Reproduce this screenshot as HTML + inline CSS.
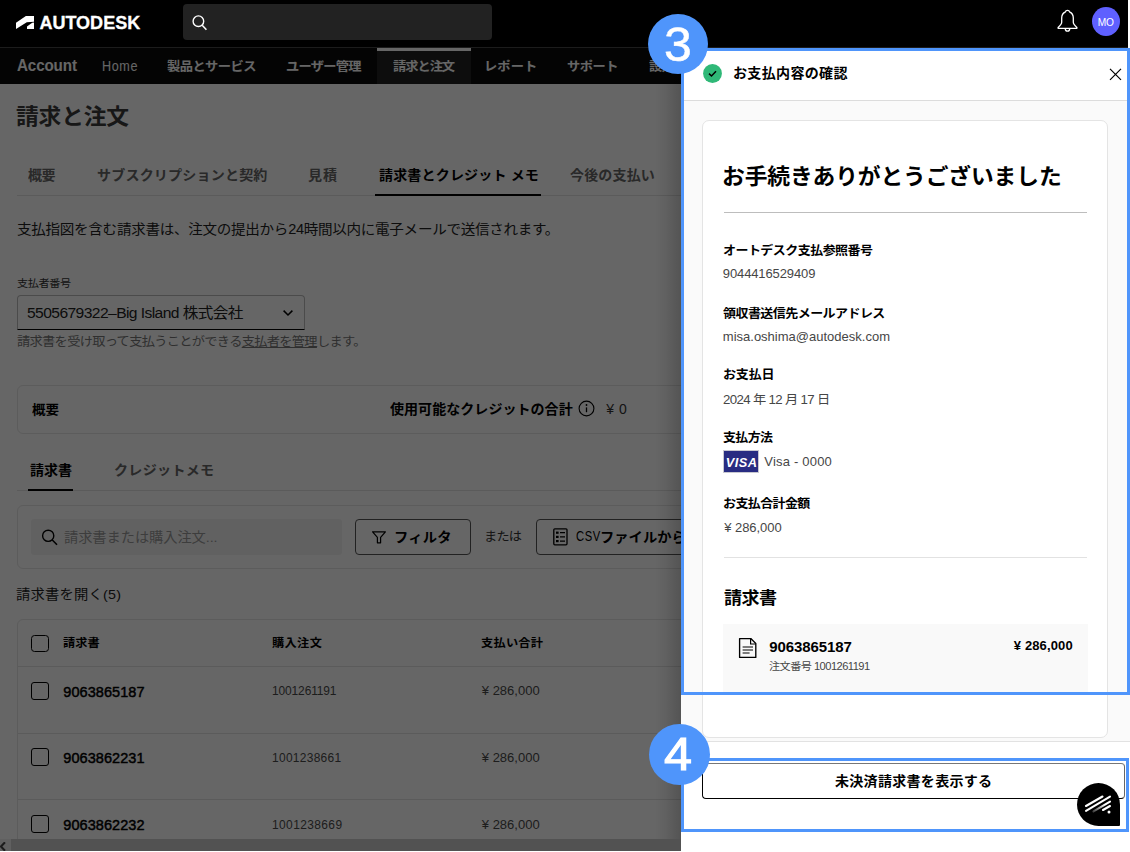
<!DOCTYPE html>
<html lang="ja">
<head>
<meta charset="utf-8">
<title>請求と注文 - Autodesk Account</title>
<style>
*{box-sizing:border-box;margin:0;padding:0}
html,body{width:1130px;height:852px;overflow:hidden;background:#fff}
body{font-family:"Liberation Sans","Noto Sans CJK JP",sans-serif;color:#000;position:relative}
.a{position:absolute;display:block}
.t{position:absolute;white-space:nowrap;line-height:1.3}
.t u{text-underline-offset:1px}
#page,#top,#panel,#anno{position:absolute;left:0;top:0;width:1130px;height:852px;overflow:hidden}
#page{width:681px;height:839px}
#overlay{position:absolute;left:0;top:47px;width:681px;height:792px;background:rgba(0,0,0,0.6)}
#shadow{position:absolute;left:655px;top:48px;width:26px;height:791px;background:linear-gradient(to right,rgba(0,0,0,0),rgba(0,0,0,0.05) 40%,rgba(0,0,0,0.18))}
#sbar{position:absolute;left:0;top:839px;width:681px;height:11.5px;background:#525252}
#sbar i{position:absolute;left:0;top:0;width:11px;height:11.5px;background:#606060}
</style>
</head>
<body>
<main id="page">
<div class="a" style="left:0px;top:47px;width:1130px;height:37px;background:#0c0c0c"></div>
<div class="a" style="left:377px;top:48px;width:94px;height:36px;background:#222"></div>
<div class="a" style="left:377px;top:48px;width:94px;height:3px;background:#fff"></div>
<div class="a" style="left:0px;top:84px;width:1130px;height:768px;background:#fff"></div>
<div class="a" style="left:17px;top:195px;width:700px;height:1px;background:#e4e4e4"></div>
<div class="a" style="left:375px;top:194px;width:166px;height:2px;background:#000"></div>
<div class="a" style="left:17px;top:295px;width:288px;height:34.5px;border:1px solid #bbb;border-bottom:1.5px solid #000;border-radius:4px 4px 0 0"></div>
<svg class="a" style="left:282px;top:308px" width="12" height="10" viewBox="0 0 12 10"><path d="M1.6 2.6L6 7l4.4-4.4" fill="none" stroke="#000" stroke-width="1.5"/></svg>
<div class="a" style="left:17px;top:385px;width:700px;height:49px;border:1px solid #e6e6e6;border-radius:6px"></div>
<svg class="a" style="left:578.15px;top:400.25px" width="17" height="17" viewBox="0 0 17 17"><circle cx="8.5" cy="8.5" r="7.4" fill="none" stroke="#000" stroke-width="1.1"/><path d="M8.5 7.4v4.8" stroke="#000" stroke-width="1.3"/><circle cx="8.5" cy="5" r="0.9" fill="#000"/></svg>
<div class="a" style="left:17px;top:490px;width:700px;height:1px;background:#e4e4e4"></div>
<div class="a" style="left:28px;top:489px;width:45px;height:2px;background:#000"></div>
<div class="a" style="left:17px;top:505px;width:700px;height:64px;border:1px solid #e6e6e6;border-radius:6px"></div>
<div class="a" style="left:31px;top:519px;width:310.5px;height:35.5px;background:#f3f3f3;border-radius:3px"></div>
<svg class="a" style="left:40px;top:528px" width="20" height="20" viewBox="0 0 20 20"><circle cx="8.2" cy="7.8" r="5.6" fill="none" stroke="#000" stroke-width="1.4"/><path d="M12.3 12L17 16.8" stroke="#000" stroke-width="1.5" fill="none"/></svg>
<div class="a" style="left:355px;top:519px;width:116px;height:35.5px;border:1px solid #555;border-radius:4px"></div>
<svg class="a" style="left:371px;top:530px" width="16" height="15" viewBox="0 0 16 15"><path d="M1.6 1.8h12.8L9.6 7.4v5.4H6.4V7.4z" fill="none" stroke="#000" stroke-width="1.2" stroke-linejoin="round"/></svg>
<div class="a" style="left:535.5px;top:519px;width:260px;height:35.5px;border:1px solid #555;border-radius:4px"></div>
<svg class="a" style="left:553px;top:528px" width="15" height="18" viewBox="0 0 15 18"><rect x="0.8" y="0.8" width="13.2" height="16" rx="1" fill="none" stroke="#000" stroke-width="1.3"/><rect x="3" y="3.6" width="2.6" height="2.2" fill="#000"/><rect x="3" y="7.8" width="2.6" height="2.2" fill="#000"/><rect x="3" y="12" width="2.6" height="2.2" fill="#000"/><path d="M7 4.7h5M7 8.9h5M7 13.1h5" stroke="#000" stroke-width="1.2"/></svg>
<div class="a" style="left:17px;top:619px;width:700px;height:300px;border:1px solid #e6e6e6;border-radius:6px"></div>
<div class="a" style="left:18px;top:666px;width:699px;height:1px;background:#e4e4e4"></div>
<div class="a" style="left:18px;top:733px;width:699px;height:1px;background:#e4e4e4"></div>
<div class="a" style="left:18px;top:799px;width:699px;height:1px;background:#e4e4e4"></div>
<div class="a" style="left:31px;top:634.8px;width:18px;height:17.2px;border:1.3px solid #000;border-radius:3.5px"></div>
<div class="a" style="left:31px;top:682px;width:18px;height:18px;border:1px solid #000;border-radius:3px"></div>
<div class="a" style="left:31px;top:748.2px;width:18px;height:18px;border:1px solid #000;border-radius:3px"></div>
<div class="a" style="left:31px;top:815px;width:18px;height:18px;border:1px solid #000;border-radius:3px"></div>
<div class="t" style="left:17.3px;top:55.4px;font-size:16.5px;font-weight:700;letter-spacing:-0.14px;color:#fff;transform:scaleX(0.92);transform-origin:0 0;">Account</div>
<div class="t" style="left:102.3px;top:57px;font-size:14px;font-weight:400;letter-spacing:0.7px;color:#fff;transform:scaleX(0.9);transform-origin:0 0;">Home</div>
<div class="t" style="left:167px;top:58.5px;font-size:12.5px;font-weight:700;letter-spacing:-0.517px;color:#fff;transform:scaleX(1.06);transform-origin:0 0;">製品とサービス</div>
<div class="t" style="left:286px;top:58.5px;font-size:12.5px;font-weight:700;letter-spacing:-0.7px;color:#fff;transform:scaleX(1.06);transform-origin:0 0;">ユーザー管理</div>
<div class="t" style="left:392.8px;top:58.5px;font-size:12.5px;font-weight:700;letter-spacing:-0.975px;color:#fff;transform:scaleX(1.06);transform-origin:0 0;">請求と注文</div>
<div class="t" style="left:484px;top:58.5px;font-size:12.5px;font-weight:700;letter-spacing:0.1px;color:#fff;transform:scaleX(1.06);transform-origin:0 0;">レポート</div>
<div class="t" style="left:566.5px;top:58.5px;font-size:12.5px;font-weight:700;letter-spacing:-0.5px;color:#fff;transform:scaleX(1.06);transform-origin:0 0;">サポート</div>
<div class="t" style="left:649px;top:58.5px;font-size:12.5px;font-weight:700;letter-spacing:-0.5px;color:#fff;transform:scaleX(1.06);transform-origin:0 0;">設定</div>
<div class="t" style="left:16px;top:104.2px;font-size:21.5px;font-weight:700;letter-spacing:-0.2px;color:#3a3a3a;transform:scaleX(1.06);transform-origin:0 0;">請求と注文</div>
<div class="t" style="left:28px;top:166.8px;font-size:13.25px;font-weight:700;letter-spacing:-0.5px;color:#666;transform:scaleX(1.06);transform-origin:0 0;">概要</div>
<div class="t" style="left:97px;top:166.8px;font-size:13.25px;font-weight:700;letter-spacing:0.158px;color:#666;transform:scaleX(1.06);transform-origin:0 0;">サブスクリプションと契約</div>
<div class="t" style="left:308px;top:166.8px;font-size:13.25px;font-weight:700;letter-spacing:1px;color:#666;transform:scaleX(1.06);transform-origin:0 0;">見積</div>
<div class="t" style="left:379px;top:166.8px;font-size:13.25px;font-weight:700;letter-spacing:0.125px;color:#000;transform:scaleX(1.06);transform-origin:0 0;">請求書とクレジット メモ</div>
<div class="t" style="left:569.8px;top:167px;font-size:13.25px;font-weight:700;letter-spacing:0.12px;color:#666;transform:scaleX(1.06);transform-origin:0 0;">今後の支払い</div>
<div class="t" style="left:16.5px;top:220.7px;font-size:13.75px;font-weight:400;letter-spacing:-0.288px;color:#222;transform:scaleX(1.06);transform-origin:0 0;">支払指図を含む請求書は、注文の提出から24時間以内に電子メールで送信されます。</div>
<div class="t" style="left:16.5px;top:277.3px;font-size:10.5px;font-weight:400;letter-spacing:-0.375px;color:#333;transform:scaleX(1.06);transform-origin:0 0;">支払者番号</div>
<div class="t" style="left:27px;top:303.9px;font-size:14.75px;font-weight:400;letter-spacing:-0.558px;color:#222;transform:scaleX(1.06);transform-origin:0 0;">5505679322–Big Island 株式会社</div>
<div class="t" style="left:16.5px;top:333.5px;font-size:12.5px;font-weight:400;letter-spacing:-0.676px;color:#777;transform:scaleX(1.06);transform-origin:0 0;">請求書を受け取って支払うことができる<u>支払者を管理</u>します。</div>
<div class="t" style="left:32px;top:401.7px;font-size:12.75px;font-weight:700;letter-spacing:0.1px;color:#000;transform:scaleX(1.06);transform-origin:0 0;">概要</div>
<div class="t" style="left:390.3px;top:401.2px;font-size:13.25px;font-weight:700;letter-spacing:0.008px;color:#000;transform:scaleX(1.06);transform-origin:0 0;">使用可能なクレジットの合計</div>
<div class="t" style="left:606.3px;top:400.2px;font-size:14px;font-weight:400;letter-spacing:0.5px;color:#333;">¥ 0</div>
<div class="t" style="left:30px;top:461.8px;font-size:13.25px;font-weight:700;letter-spacing:-0.033px;color:#000;transform:scaleX(1.06);transform-origin:0 0;">請求書</div>
<div class="t" style="left:113.5px;top:461.8px;font-size:13.25px;font-weight:700;letter-spacing:0.286px;color:#666;transform:scaleX(1.06);transform-origin:0 0;">クレジットメモ</div>
<div class="t" style="left:63.5px;top:528.5px;font-size:13.5px;font-weight:400;letter-spacing:-0.123px;color:#999;transform:scaleX(1.06);transform-origin:0 0;">請求書または購入注文...</div>
<div class="t" style="left:394.3px;top:528.5px;font-size:13.5px;font-weight:700;letter-spacing:0.167px;color:#000;transform:scaleX(1.06);transform-origin:0 0;">フィルタ</div>
<div class="t" style="left:483.5px;top:528.9px;font-size:12.5px;font-weight:400;letter-spacing:-0.8px;color:#333;transform:scaleX(1.06);transform-origin:0 0;">または</div>
<div class="t" style="left:575.8px;top:527.2px;font-size:14px;font-weight:400;letter-spacing:0.8px;color:#000;transform:scaleX(0.8);transform-origin:0 0;">CSV</div>
<div class="t" style="left:600px;top:528.5px;font-size:13.5px;font-weight:700;letter-spacing:0px;color:#000;transform:scaleX(1.06);transform-origin:0 0;">ファイルからインポート</div>
<div class="t" style="left:16.3px;top:585.9px;font-size:13.5px;font-weight:400;letter-spacing:0.188px;color:#222;transform:scaleX(1.06);transform-origin:0 0;">請求書を開く(5)</div>
<div class="t" style="left:63.3px;top:636.4px;font-size:11.5px;font-weight:700;letter-spacing:0.05px;color:#000;transform:scaleX(1.06);transform-origin:0 0;">請求書</div>
<div class="t" style="left:271.5px;top:636px;font-size:11.5px;font-weight:700;letter-spacing:0.35px;color:#000;transform:scaleX(1.06);transform-origin:0 0;">購入注文</div>
<div class="t" style="left:481px;top:636px;font-size:11.5px;font-weight:700;letter-spacing:0.25px;color:#000;transform:scaleX(1.06);transform-origin:0 0;">支払い合計</div>
<div class="t" style="left:63.3px;top:682.6px;font-size:14.5px;font-weight:400;letter-spacing:0.067px;color:#000;-webkit-text-stroke:0.45px currentColor;">9063865187</div>
<div class="t" style="left:271.5px;top:682.8px;font-size:13px;font-weight:400;letter-spacing:-0.137px;color:#4a4a4a;transform:scaleX(0.92);transform-origin:0 0;">1001261191</div>
<div class="t" style="left:481.8px;top:683.1px;font-size:13px;font-weight:400;letter-spacing:-0px;color:#4a4a4a;">¥ 286,000</div>
<div class="t" style="left:63.3px;top:749.4px;font-size:14.5px;font-weight:400;letter-spacing:0.067px;color:#000;-webkit-text-stroke:0.45px currentColor;">9063862231</div>
<div class="t" style="left:271.5px;top:749.5px;font-size:13px;font-weight:400;letter-spacing:0.312px;color:#4a4a4a;transform:scaleX(0.92);transform-origin:0 0;">1001238661</div>
<div class="t" style="left:481.8px;top:749.9px;font-size:13px;font-weight:400;letter-spacing:-0px;color:#4a4a4a;">¥ 286,000</div>
<div class="t" style="left:63.3px;top:816.4px;font-size:14.5px;font-weight:400;letter-spacing:0.067px;color:#000;-webkit-text-stroke:0.45px currentColor;">9063862232</div>
<div class="t" style="left:271.5px;top:816.5px;font-size:13px;font-weight:400;letter-spacing:0.425px;color:#4a4a4a;transform:scaleX(0.92);transform-origin:0 0;">1001238669</div>
<div class="t" style="left:481.8px;top:816.9px;font-size:13px;font-weight:400;letter-spacing:-0px;color:#4a4a4a;">¥ 286,000</div>
</main>
<div id="overlay"></div>
<div id="shadow"></div>
<div id="sbar"><i></i><svg class="a" style="left:0;top:3px" width="7" height="9" viewBox="0 0 7 9"><path d="M5 0.3L0.9 4.5l4.1 4.2" fill="none" stroke="#1c1c1c" stroke-width="2.1"/></svg></div>
<header id="top">
<div class="a" style="left:0px;top:0px;width:1128px;height:47px;background:#000"></div>
<div class="a" style="left:0px;top:47px;width:1128px;height:1px;background:#1c1c1c"></div>
<svg class="a" style="left:15.9px;top:16.05px" width="18" height="13" viewBox="0 0 18 13"><path fill="#fff" d="M0 13V6.8L9.9 0H18v5.8l-7.2 0.5z"/><path fill="#fff" d="M18 6.6V13h-7v-2.5l5.2-3.7z"/></svg>
<div class="a" style="left:183px;top:4px;width:309px;height:36px;background:#222;border-radius:4px"></div>
<svg class="a" style="left:190px;top:13px" width="20" height="20" viewBox="0 0 20 20"><circle cx="8.4" cy="8.2" r="5.3" fill="none" stroke="#fff" stroke-width="1.4"/><path d="M12.2 12.2L16.4 16.8" stroke="#fff" stroke-width="1.5" fill="none"/></svg>
<svg class="a" style="left:1055px;top:8px" width="25" height="26" viewBox="0 0 25 26"><path d="M12.5 2.3c-1.2 0-1.9 0.5-2 1.5C8.2 4.8 6.7 7.2 6.7 10v4.2c0 1.6-1.2 3-3.6 5.2v0.9h18.8v-0.9c-2.4-2.2-3.6-3.6-3.6-5.2V10c0-2.8-1.5-5.2-3.8-6.2-0.1-1-0.8-1.5-2-1.5z" fill="none" stroke="#fff" stroke-width="1.3" stroke-linejoin="round"/><path d="M10.2 20.6c0.2 1.6 1.1 2.6 2.3 2.6s2.1-1 2.3-2.6" fill="none" stroke="#fff" stroke-width="1.3"/></svg>
<div class="a" style="left:1091.8px;top:7.2px;width:28.4px;height:29.2px;border-radius:50%;background:#5f60ff"></div>
<div class="t" style="left:39.4px;top:12.1px;font-size:18px;font-weight:700;letter-spacing:0.014px;color:#fff;-webkit-text-stroke:0.3px currentColor;">AUTODESK</div>
<div class="t" style="left:1097.8px;top:16.1px;font-size:10.2px;font-weight:400;letter-spacing:-0.4px;color:#fff;">MO</div>
</header>
<aside id="panel">
<div class="a" style="left:681px;top:48px;width:449px;height:52px;background:#fff"></div>
<div class="a" style="left:681px;top:99.5px;width:449px;height:1px;background:#dcdcdc"></div>
<div class="a" style="left:681px;top:100.5px;width:449px;height:640.5px;background:#fafafa"></div>
<div class="a" style="left:702px;top:120px;width:406px;height:618px;background:#fff;border:1px solid #e4e4e4;border-radius:7px"></div>
<div class="a" style="left:681px;top:741px;width:449px;height:1px;background:#e2e2e2"></div>
<div class="a" style="left:681px;top:742px;width:449px;height:110px;background:#fff"></div>
<svg class="a" style="left:703px;top:64.1px" width="19" height="19" viewBox="0 0 19 19"><circle cx="9.5" cy="9.5" r="9.4" fill="#2fb877"/><path d="M6 9.6l2.5 2.4 4.5-4.8" fill="none" stroke="#000" stroke-width="1.5"/></svg>
<svg class="a" style="left:1109px;top:68px" width="13" height="13" viewBox="0 0 13 13"><path d="M1 0.8l11 11M12 0.8l-11 11" stroke="#000" stroke-width="1.2" fill="none"/></svg>
<div class="a" style="left:724px;top:212px;width:363px;height:1px;background:#bdbdbd"></div>
<div class="a" style="left:723.2px;top:450.4px;width:36.3px;height:22.2px;background:#282c82;border:1px solid #c8c8d0"></div>
<div class="a" style="left:724px;top:556.5px;width:363px;height:1px;background:#e2e2e2"></div>
<div class="a" style="left:723px;top:624px;width:364.5px;height:69px;background:#f9f9f9"></div>
<svg class="a" style="left:738px;top:637px" width="20" height="22" viewBox="0 0 20 22"><path d="M1.6 1.6h11.2l5 5v13.8H1.6z" fill="none" stroke="#000" stroke-width="1.35" stroke-linejoin="round"/><path d="M12.6 1.8v5.2h5" fill="none" stroke="#000" stroke-width="1.2"/><path d="M4.6 10h10.4M4.6 13h10.4M4.6 16h7" stroke="#000" stroke-width="1.2"/></svg>
<div class="a" style="left:702px;top:763px;width:423px;height:36px;background:#fff;border:1px solid #000;border-top-color:#777;border-right-color:#666;border-radius:4px"></div>
<div class="t" style="left:732.8px;top:65.1px;font-size:13.25px;font-weight:700;letter-spacing:0.288px;color:#000;transform:scaleX(1.06);transform-origin:0 0;">お支払内容の確認</div>
<div class="t" style="left:722px;top:163.8px;font-size:21.5px;font-weight:700;letter-spacing:-0.147px;color:#000;transform:scaleX(1.06);transform-origin:0 0;">お手続きありがとうございました</div>
<div class="t" style="left:722.8px;top:243.7px;font-size:12.25px;font-weight:700;letter-spacing:-0.5px;color:#000;transform:scaleX(1.06);transform-origin:0 0;">オートデスク支払参照番号</div>
<div class="t" style="left:722.8px;top:266.3px;font-size:13px;font-weight:400;letter-spacing:-0.117px;color:#464646;">9044416529409</div>
<div class="t" style="left:723px;top:306.5px;font-size:12.25px;font-weight:700;letter-spacing:-0.508px;color:#000;transform:scaleX(1.06);transform-origin:0 0;">領収書送信先メールアドレス</div>
<div class="t" style="left:722.8px;top:328.6px;font-size:13px;font-weight:400;letter-spacing:0.004px;color:#464646;">misa.oshima@autodesk.com</div>
<div class="t" style="left:722.8px;top:368.4px;font-size:12.25px;font-weight:700;letter-spacing:-0.133px;color:#000;transform:scaleX(1.06);transform-origin:0 0;">お支払日</div>
<div class="t" style="left:722.8px;top:392px;font-size:12.5px;font-weight:400;letter-spacing:-0.619px;color:#464646;transform:scaleX(1.06);transform-origin:0 0;">2024 年 12 月 17 日</div>
<div class="t" style="left:722.8px;top:431.1px;font-size:12.25px;font-weight:700;letter-spacing:-0.633px;color:#000;transform:scaleX(1.06);transform-origin:0 0;">支払方法</div>
<div class="t" style="left:725.8px;top:454.5px;font-size:12.75px;font-weight:700;letter-spacing:0.433px;color:#fff;"><i>VISA</i></div>
<div class="t" style="left:764.3px;top:454.1px;font-size:13px;font-weight:400;letter-spacing:0.2px;color:#464646;">Visa - 0000</div>
<div class="t" style="left:722.8px;top:497.4px;font-size:12.25px;font-weight:700;letter-spacing:-0.567px;color:#000;transform:scaleX(1.06);transform-origin:0 0;">お支払合計金額</div>
<div class="t" style="left:724.3px;top:520.1px;font-size:13px;font-weight:400;letter-spacing:-0.062px;color:#464646;">¥ 286,000</div>
<div class="t" style="left:724.3px;top:588px;font-size:17px;font-weight:700;letter-spacing:-0.5px;color:#000;transform:scaleX(1.06);transform-origin:0 0;">請求書</div>
<div class="t" style="left:769.2px;top:637.1px;font-size:15px;font-weight:700;letter-spacing:-0.078px;color:#000;">9063865187</div>
<div class="t" style="left:769.2px;top:660px;font-size:10.5px;font-weight:400;letter-spacing:-0.507px;color:#464646;transform:scaleX(1.06);transform-origin:0 0;">注文番号 1001261191</div>
<div class="t" style="left:1013.8px;top:638.2px;font-size:13px;font-weight:700;letter-spacing:0.125px;color:#000;">¥ 286,000</div>
<div class="t" style="left:834.5px;top:773px;font-size:13.25px;font-weight:700;letter-spacing:0.25px;color:#000;transform:scaleX(1.06);transform-origin:0 0;">未決済請求書を表示する</div>
<svg class="a" style="left:1077px;top:783px" width="43" height="43" viewBox="0 0 43 43"><path d="M21.5 0A21.5 21.5 0 0 1 43 21.5V42a1 1 0 0 1-1 1H21.5A21.5 21.5 0 0 1 21.5 0z" fill="#000"/><defs><linearGradient id="g1" x1="0" y1="1" x2="1" y2="0"><stop offset="0" stop-color="#444"/><stop offset="0.7" stop-color="#fff"/></linearGradient></defs><path d="M9 23l16.5-9.5M9 27.8l24-14.2M26 27l7-4" stroke="#fff" stroke-width="2.1" stroke-linecap="round"/><path d="M16.5 28.4l16.5-9.8" stroke="url(#g1)" stroke-width="2.1" stroke-linecap="round"/><circle cx="32" cy="29" r="1.5" fill="#fff"/></svg>
</aside>
<div id="anno">
<div class="a" style="left:681px;top:48px;width:449px;height:647px;border:3px solid #4f95fb"></div>
<div class="a" style="left:681px;top:758px;width:448px;height:74px;border:3px solid #4f95fb"></div>
<div class="a" style="left:648px;top:13.9px;width:60.2px;height:60.2px;border-radius:50%;background:#4f95fb"></div>
<div class="a" style="left:648.7px;top:723.7px;width:61px;height:61px;border-radius:50%;background:#4f95fb"></div>
<div class="t" style="left:664px;top:12.8px;font-size:48.5px;font-weight:400;letter-spacing:0px;color:#fff;-webkit-text-stroke:0.5px currentColor;transform:scaleX(1.03);transform-origin:0 0;">3</div>
<div class="t" style="left:664.2px;top:722.9px;font-size:47px;font-weight:400;letter-spacing:0px;color:#fff;-webkit-text-stroke:1.1px currentColor;transform:scaleX(1.07);transform-origin:0 0;">4</div>
</div>
</body>
</html>
